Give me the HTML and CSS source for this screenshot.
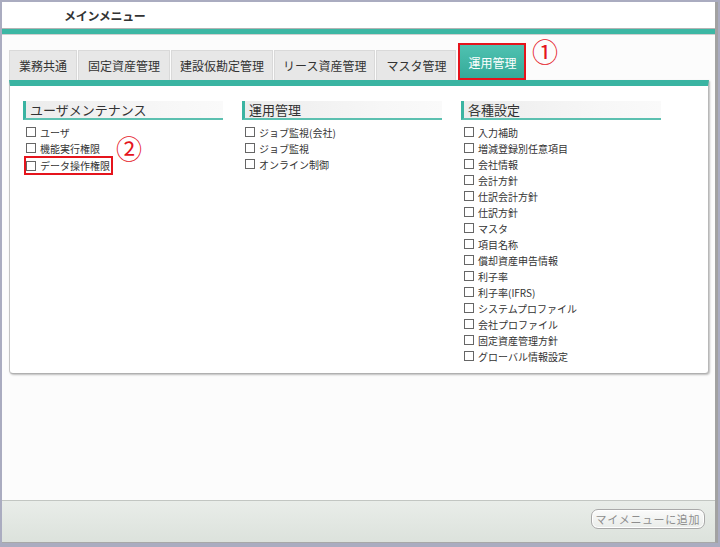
FILE: index.html
```html
<!DOCTYPE html>
<html lang="ja">
<head>
<meta charset="utf-8">
<title>メインメニュー</title>
<link rel="stylesheet" href="styles.css">
</head>
<body>
<div class="window">
  <header class="titlebar"><h1 class="title">メインメニュー</h1></header>
  <div class="accent"></div>
  <main class="content">
    <nav class="tabs">
      <div class="tab">業務共通</div>
      <div class="tab">固定資産管理</div>
      <div class="tab narrow">建設仮勘定管理</div>
      <div class="tab narrow">リース資産管理</div>
      <div class="tab">マスタ管理</div>
      <div class="tab active">運用管理</div>
    </nav>
    <section class="panel">
      <div class="group">
        <h2 class="group-title">ユーザメンテナンス</h2>
        <ul class="items">
          <li class="item"><span class="box"></span>ユーザ</li>
          <li class="item"><span class="box"></span>機能実行権限</li>
          <li class="item"><span class="label marked"><span class="box"></span>データ操作権限</span></li>
        </ul>
      </div>
      <div class="group">
        <h2 class="group-title">運用管理</h2>
        <ul class="items">
          <li class="item"><span class="box"></span>ジョブ監視(会社)</li>
          <li class="item"><span class="box"></span>ジョブ監視</li>
          <li class="item"><span class="box"></span>オンライン制御</li>
        </ul>
      </div>
      <div class="group">
        <h2 class="group-title">各種設定</h2>
        <ul class="items">
          <li class="item"><span class="box"></span>入力補助</li>
          <li class="item"><span class="box"></span>増減登録別任意項目</li>
          <li class="item"><span class="box"></span>会社情報</li>
          <li class="item"><span class="box"></span>会計方針</li>
          <li class="item"><span class="box"></span>仕訳会計方針</li>
          <li class="item"><span class="box"></span>仕訳方針</li>
          <li class="item"><span class="box"></span>マスタ</li>
          <li class="item"><span class="box"></span>項目名称</li>
          <li class="item"><span class="box"></span>償却資産申告情報</li>
          <li class="item"><span class="box"></span>利子率</li>
          <li class="item"><span class="box"></span>利子率(IFRS)</li>
          <li class="item"><span class="box"></span>システムプロファイル</li>
          <li class="item"><span class="box"></span>会社プロファイル</li>
          <li class="item"><span class="box"></span>固定資産管理方針</li>
          <li class="item"><span class="box"></span>グローバル情報設定</li>
        </ul>
      </div>
    </section>
  </main>
  <footer class="footer">
    <button class="add-btn" type="button">マイメニューに追加</button>
  </footer>
  <span class="note note-1">①</span>
  <span class="note note-2">②</span>
</div>
</body>
</html>
```
FILE: styles.css
```css
* { box-sizing: border-box; }
html, body { margin: 0; padding: 0; }
body {
  background: #aaacc0;
  font-family: "Noto Sans CJK JP", "Noto Sans", sans-serif;
  color: #333;
  width: 720px;
  height: 547px;
  overflow: hidden;
}
.window {
  position: relative;
  margin: 2px 2px 0 2px;
  width: 716px;
  height: 541px;
  background: #fcfcfc;
  border-right: 3px solid #a2a2a2;
  border-bottom: 1px solid #a8a8a8;
  display: flex;
  flex-direction: column;
}
.titlebar {
  height: 26px;
  background: #fff;
  display: flex;
  align-items: center;
  padding-left: 62px;
}
.title {
  margin: 0;
  font-size: 12px;
  font-weight: bold;
  color: #333;
  letter-spacing: -0.3px;
}
.accent {
  height: 7px;
  border-top: 1px solid #b4b4b4;
  border-bottom: 1px solid #cfcfcf;
  background: #3cb7a4;
}
.content {
  flex: 1;
  padding: 8px 0 0 7px;
}
.tabs {
  display: flex;
  align-items: flex-end;
  gap: 1px;
  height: 37px;
}
.tab {
  height: 30px;
  line-height: 29px;
  padding: 0 9px;
  font-size: 12px;
  color: #333;
  background: #e7e7e7;
  border: 1px solid #d9d9d9;
  border-bottom: none;
  white-space: nowrap;
}
.tab.narrow { padding: 0 8px; }
.tab.active {
  height: 37px;
  line-height: 26px;
  padding: 5px 8px 0;
  margin-left: 1px;
  color: #fff;
  background: linear-gradient(#4fc2b1, #35aa99);
  border: 2px solid #e5141c;
}
.panel {
  width: 700px;
  background: #fff;
  border-top: 6px solid #3ab4a2;
  border-left: 1px solid #c4c4c4;
  border-right: 1px solid #b8b8b8;
  border-bottom: 1px solid #b0b0b0;
  border-radius: 0 0 4px 4px;
  box-shadow: 1px 1px 2px rgba(0,0,0,0.25);
  padding: 15px 13px 9px;
  display: flex;
  gap: 19px;
  align-items: flex-start;
}
.group { width: 200px; }
.group-title {
  margin: 0;
  height: 19px;
  line-height: 17px;
  font-size: 13px;
  font-weight: normal;
  color: #333;
  padding-left: 4px;
  border-left: 3px solid #3ab4a2;
  border-bottom: 2px solid #5cc0b0;
  background: linear-gradient(to right, #ececec, #f7f7f7 70%, #fafafa);
}
.items {
  list-style: none;
  margin: 4px 0 0;
  padding: 0 0 0 3px;
}
.item {
  height: 16px;
  display: flex;
  align-items: center;
  font-size: 10px;
  color: #333;
  white-space: nowrap;
}
.label { display: inline-flex; align-items: center; height: 16px; }
.box {
  width: 10px;
  height: 10px;
  border: 1px solid #666;
  background: #fff;
  margin-right: 4px;
  flex: none;
}
.marked {
  outline: 2px solid #e5141c;
  outline-offset: 0;
  padding-right: 1px;
  height: 15px;
  margin-top: 3px;
}
.footer {
  height: 42px;
  margin-top: auto;
  border-top: 1px solid #c2c6c2;
  background: linear-gradient(#e9ede9, #dce2dc);
  display: flex;
  justify-content: flex-end;
  align-items: flex-start;
  padding: 8px 10px 0 0;
}
.add-btn {
  height: 20px;
  padding: 0 4px;
  font-family: "Noto Sans CJK JP", "Noto Sans", sans-serif;
  font-size: 11px;
  letter-spacing: 0.6px;
  color: #8e8e8e;
  background: linear-gradient(#fbfbfb, #e9ece9);
  border: 1px solid #a9a9a9;
  border-radius: 7px;
  box-shadow: inset 0 0 0 1px #fff;
  line-height: 17px;
}
.note {
  position: absolute;
  color: #e5141c;
  font-size: 26px;
  line-height: 26px;
  font-family: "Noto Sans CJK JP", sans-serif;
}
.note-1 { left: 530px; top: 36px; }
.note-2 { left: 114px; top: 133px; }
```
